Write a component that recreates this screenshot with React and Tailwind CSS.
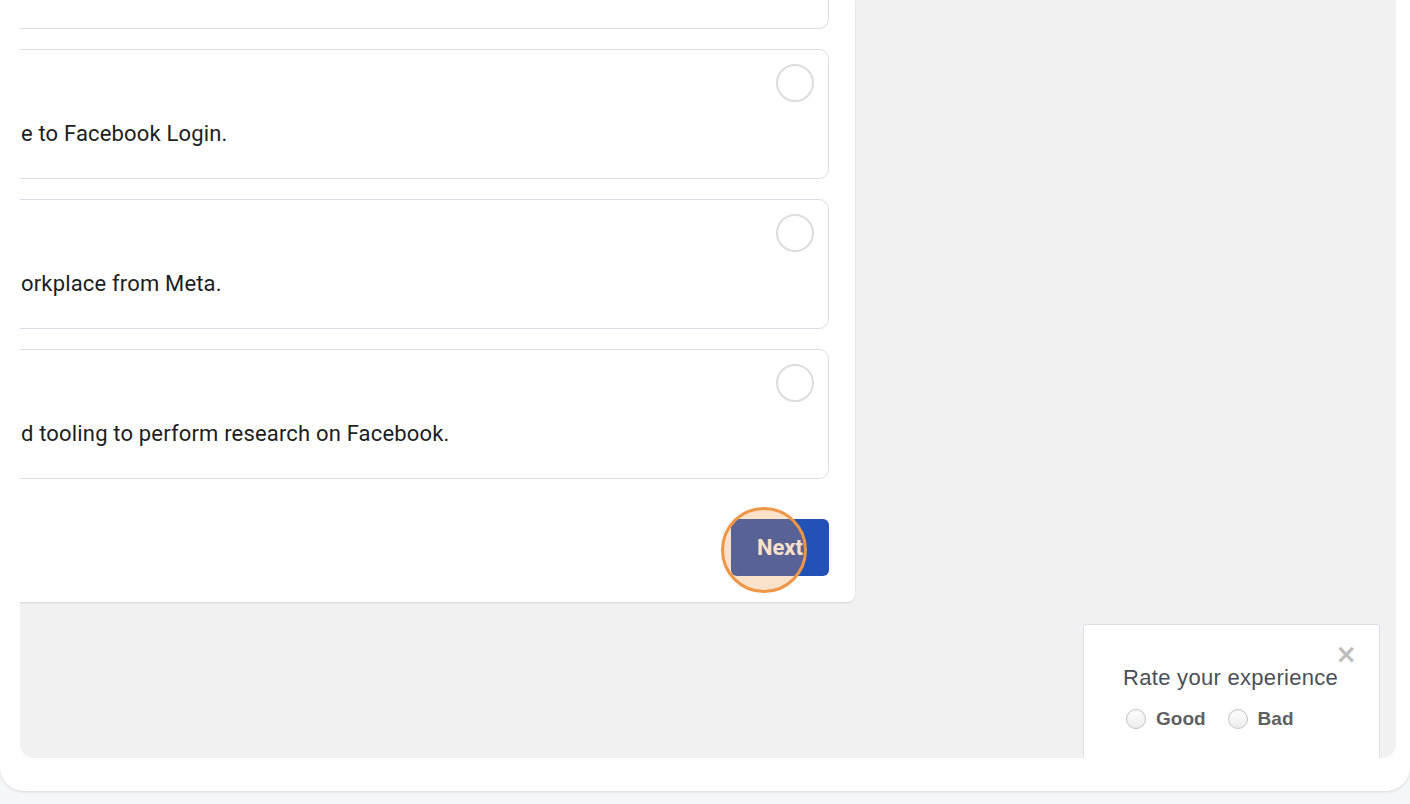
import React from "react";

const options = [
  { text: "" },
  { text: "e to Facebook Login." },
  { text: "orkplace from Meta." },
  { text: "d tooling to perform research on Facebook." },
];

function Option({ text }) {
  return (
    <div className="-ml-[20px] h-[130px] w-[829px] shrink-0 rounded-[10px] border border-[#dadde1] bg-white flex flex-col pt-[14px] pr-[14px]">
      <div className="flex justify-end">
        <div className="h-[38px] w-[38px] rounded-full border-2 border-[#dcdcdc] bg-white" />
      </div>
      <div className="mt-[19px] pl-[20px] text-[22px] leading-[26px] tracking-[0.17px] text-[#1c1e21] whitespace-nowrap" style={{ fontFamily: "Roboto, 'Noto Sans', sans-serif" }}>
        {text}
      </div>
    </div>
  );
}

function Radio({ label }) {
  return (
    <div className="flex items-center gap-[10px]">
      <div className="h-[20px] w-[20px] rounded-full border border-[#c4c4c4] bg-gradient-to-b from-white to-[#ececec] shadow-[inset_0_1px_1px_rgba(0,0,0,0.05)]" />
      <span className="text-[19px] font-bold text-[#606060]">{label}</span>
    </div>
  );
}

export default function App() {
  return (
    <div className="w-[1410px] h-[804px] bg-[#f5f6f8] overflow-hidden" style={{ fontFamily: "'Liberation Sans', Arial, sans-serif" }}>
      <div className="h-[791px] bg-white rounded-b-[24px] shadow-[0_1px_3px_rgba(0,0,0,0.12)] pl-[20px] pr-[14px] pb-[33px]">
        <div className="relative h-[758px] bg-[#f1f1f1] rounded-b-[14px] overflow-hidden">
          <div className="w-[835px] h-[602px] bg-white rounded-br-[8px] shadow-[0_1px_2px_rgba(0,0,0,0.12)] flex flex-col">
            <div className="-mt-[101px] flex flex-col gap-[20px]">
              {options.map((o, i) => (
                <Option key={i} text={o.text} />
              ))}
            </div>
            <div className="mt-[40px] flex justify-end pr-[26px]">
              <div className="relative">
                <button className="h-[57px] w-[98px] rounded-[6px] bg-[#2252b5] text-white text-[22px] font-bold" style={{ fontFamily: "Roboto, 'Noto Sans', sans-serif" }}>
                  Next
                </button>
                <div className="absolute left-[-10px] top-[-12px] h-[86px] w-[86px] rounded-full border-[3px] border-[#ee9645] bg-[rgba(238,145,60,0.27)] pointer-events-none" />
              </div>
            </div>
          </div>

          <div className="absolute left-[1063px] top-[624px] w-[297px] h-[160px] bg-white border border-[#dddfe2] rounded-[2px]">
            <div className="absolute right-[22px] top-[16px] text-[26px] leading-[26px] font-black text-[#bdbdbd]" style={{ fontFamily: "'DejaVu Sans', sans-serif" }}>×</div>
            <div className="pl-[39px] pt-[40px]">
              <div className="text-[22px] leading-[26px] tracking-[0.3px] text-[#4b4f56]">Rate your experience</div>
              <div className="mt-[14px] flex items-center gap-[22px] pl-[3px]">
                <Radio label="Good" />
                <Radio label="Bad" />
              </div>
            </div>
          </div>
        </div>
      </div>
    </div>
  );
}
